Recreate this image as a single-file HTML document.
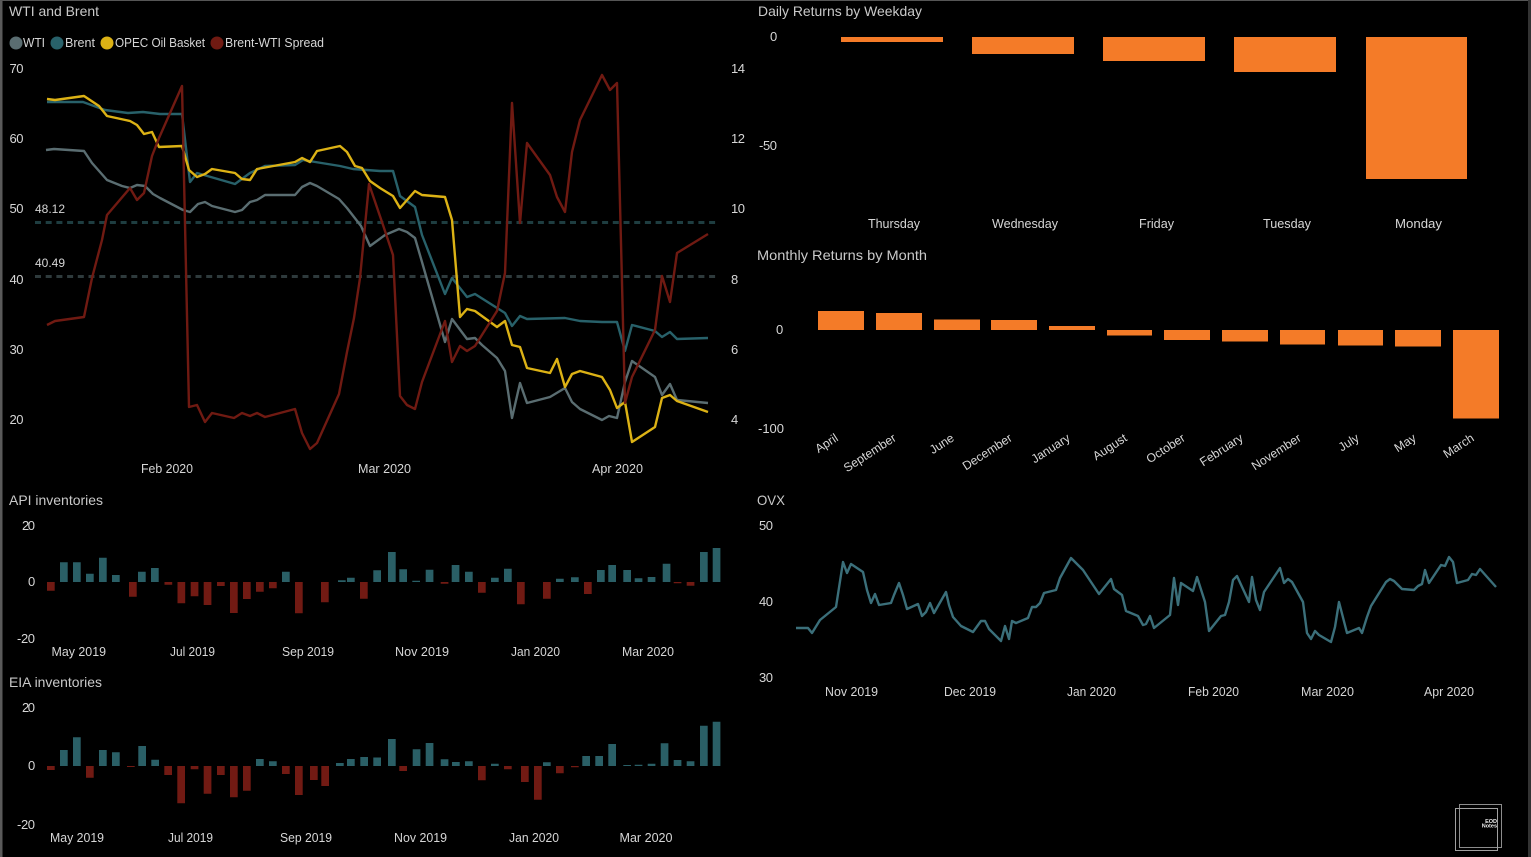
<!DOCTYPE html>
<html><head><meta charset="utf-8"><title>Oil dashboard</title>
<style>
html,body{margin:0;padding:0;background:#000;width:1531px;height:857px;overflow:hidden}
svg{display:block}
text{font-family:"Liberation Sans",sans-serif;font-size:13px;fill:#d6d6d6}
.t{fill:#c9c9c9;font-size:14px}
.l{fill:none;stroke-width:2.4;stroke-linejoin:round;stroke-linecap:butt}
.r text{font-size:12.2px}
</style></head><body>
<svg width="1531" height="857" viewBox="0 0 1531 857" xmlns="http://www.w3.org/2000/svg">
<rect width="1531" height="857" fill="#000"/>
<rect x="0" y="0" width="2.5" height="857" fill="#5a5a5a"/>
<rect x="0" y="0" width="1531" height="1" fill="#555"/>
<rect x="1528" y="0" width="3" height="857" fill="#333"/>

<!-- WTI and Brent -->
<text class="t" x="9" y="16" textLength="90" lengthAdjust="spacingAndGlyphs">WTI and Brent</text>
<circle cx="16" cy="43" r="6.5" fill="#5a6d71"/><text x="23" y="47" textLength="22" lengthAdjust="spacingAndGlyphs">WTI</text>
<circle cx="57" cy="43" r="6.5" fill="#28616a"/><text x="65" y="47" textLength="30" lengthAdjust="spacingAndGlyphs">Brent</text>
<circle cx="107" cy="43" r="6.5" fill="#dcb215"/><text x="115" y="47" textLength="90" lengthAdjust="spacingAndGlyphs">OPEC Oil Basket</text>
<circle cx="217" cy="43" r="6.5" fill="#701a12"/><text x="225" y="47" textLength="99" lengthAdjust="spacingAndGlyphs">Brent-WTI Spread</text>

<text x="9.5" y="73" textLength="14">70</text><text x="9.5" y="143" textLength="14">60</text><text x="9.5" y="213" textLength="14">50</text><text x="9.5" y="284" textLength="14">40</text><text x="9.5" y="354" textLength="14">30</text><text x="9.5" y="424" textLength="14">20</text>
<text x="731" y="73" textLength="14">14</text><text x="731" y="143" textLength="14">12</text><text x="731" y="213" textLength="14">10</text><text x="731" y="284">8</text><text x="731" y="354">6</text><text x="731" y="424">4</text>
<text x="35" y="213" style="font-size:12px" textLength="30">48.12</text>
<text x="35" y="267" style="font-size:12px" textLength="30">40.49</text>
<text x="141" y="473" textLength="52" lengthAdjust="spacingAndGlyphs">Feb 2020</text>
<text x="358" y="473" textLength="53" lengthAdjust="spacingAndGlyphs">Mar 2020</text>
<text x="592" y="473" textLength="51" lengthAdjust="spacingAndGlyphs">Apr 2020</text>

<path d="M35 222.5H718" fill="none" stroke="#1e3d40" stroke-width="3" stroke-dasharray="6 4.7"/>
<path d="M35 276.5H718" fill="none" stroke="#2e3a3c" stroke-width="3" stroke-dasharray="6 4.7"/>

<polyline class="l" stroke="#5a6d71" points="46,150 54,149 84,151 92,163 107,180 122,186 130,188 137,185 145,186 153,194 160,198 183,210 190,212 198,204 205,202 212,206 235,212 242,210 250,202 257,200 265,195 295,195 302,187 310,183 317,186 339,199 347,208 354,217 361,226 370,246 385,235 399,229 407,232 415,238 422,262 445,342 452,319 467,339 475,338 482,345 497,358 505,371 512,418 520,383 527,403 550,397 565,388 572,402 580,409 602,420 609,416 617,418 625,382 632,361 655,377 662,395 670,384 677,400 708,403"/>
<polyline class="l" stroke="#28616a" points="47,102 83,102 105,110 128,113 143,112 160,114 182,114 190,182 197,173 235,184 250,173 265,166 295,165 303,160 340,166 353,169 380,171 393,171 400,196 415,207 422,235 445,294 452,278 467,297 475,294 505,313 512,326 520,316 527,319 565,318 580,321 602,322 617,322 625,351 632,325 655,331 662,337 670,332 677,339 708,338"/>
<polyline class="l" stroke="#dcb215" points="47,99 55,100 84,96 99,106 107,116 130,121 137,125 144,134 152,132 159,147 182,146 189,170 197,177 205,174 212,169 235,173 242,179 250,180 257,169 295,162 302,158 310,162 317,151 340,146 347,152 355,166 362,168 370,181 380,188 393,196 400,208 415,191 422,195 445,197 452,220 460,317 467,309 475,311 497,327 505,321 512,345 520,347 527,368 550,373 557,359 565,387 572,374 580,371 602,377 610,390 617,408 625,402 632,442 655,427 662,398 670,395 677,401 708,412"/>
<polyline class="l" stroke="#701a12" points="47,325 55,321 84,317 92,278 102,240 107,215 130,188 137,200 144,193 152,156 159,138 182,86 189,407 197,405 205,422 212,413 234,418 242,413 250,416 257,413 265,417 295,409 302,433 310,449 317,443 339,394 347,352 354,318 360,278 369,184 383,225 393,255 400,396 407,405 415,409 422,382 445,321 452,362 460,346 467,351 475,346 497,311 505,273 512,103 520,223 527,143 550,175 557,197 565,212 572,152 580,120 602,75 610,90 617,83 625,403 632,377 655,330 662,276 670,302 677,253 708,234"/>

<!-- API inventories -->
<text class="t" x="9" y="505" textLength="94" lengthAdjust="spacingAndGlyphs">API inventories</text>
<text x="22" y="530" textLength="13">20</text><text x="28" y="586">0</text><text x="17" y="643" textLength="18">-20</text>
<text x="51.5" y="656" textLength="54.5" lengthAdjust="spacingAndGlyphs">May 2019</text>
<text x="170" y="656" textLength="45" lengthAdjust="spacingAndGlyphs">Jul 2019</text>
<text x="282" y="656" textLength="52" lengthAdjust="spacingAndGlyphs">Sep 2019</text>
<text x="395" y="656" textLength="54" lengthAdjust="spacingAndGlyphs">Nov 2019</text>
<text x="511" y="656" textLength="49" lengthAdjust="spacingAndGlyphs">Jan 2020</text>
<text x="622" y="656" textLength="52" lengthAdjust="spacingAndGlyphs">Mar 2020</text>
<path fill="#2a5f66" d="M60 582h7.7v-19.7h-7.7zM73 582h7.7v-19.7h-7.7zM86 582h7.7v-8.3h-7.7zM99 582h7.7v-24.3h-7.7zM112 582h7.7v-7h-7.7zM138 582h7.7v-10.3h-7.7zM151 582h7.7v-14h-7.7zM282 582h7.7v-10.3h-7.7zM338 582h7.7v-1.7h-7.7zM347 582h7.7v-4.3h-7.7zM373.3 582h7.7v-11.7h-7.7zM388 582h7.7v-30h-7.7zM399.3 582h7.7v-12.7h-7.7zM412.3 582h7.7v-1.3h-7.7zM425.7 582h7.7v-12.3h-7.7zM451.7 582h7.7v-17h-7.7zM465 582h7.7v-10.3h-7.7zM491 582h7.7v-4.3h-7.7zM504 582h7.7v-13.3h-7.7zM556 582h7.7v-3.3h-7.7zM571 582h7.7v-4.7h-7.7zM597 582h7.7v-12h-7.7zM608.3 582h7.7v-17h-7.7zM623.3 582h7.7v-12h-7.7zM634.7 582h7.7v-3.7h-7.7zM647.7 582h7.7v-5h-7.7zM662.7 582h7.7v-18.3h-7.7zM700 582h7.7v-30h-7.7zM712.7 582h7.7v-34h-7.7z"/>
<path fill="#711a13" d="M47 582h7.7v8.7h-7.7zM129 582h7.7v14.7h-7.7zM164.5 582h7.7v2.7h-7.7zM177.5 582h7.7v21.3h-7.7zM190.7 582h7.7v14.3h-7.7zM203.7 582h7.7v23h-7.7zM217 582h7.7v4h-7.7zM230 582h7.7v31h-7.7zM243 582h7.7v17h-7.7zM256 582h7.7v9.7h-7.7zM269 582h7.7v6.3h-7.7zM295 582h7.7v31.3h-7.7zM321 582h7.7v20.3h-7.7zM360 582h7.7v16.7h-7.7zM440.7 582h7.7v1.7h-7.7zM478 582h7.7v10.7h-7.7zM517 582h7.7v22.3h-7.7zM543 582h7.7v16.7h-7.7zM584 582h7.7v12h-7.7zM673.7 582h7.7v1.3h-7.7zM686.7 582h7.7v3.7h-7.7z"/>

<!-- EIA inventories -->
<text class="t" x="9" y="687" textLength="93" lengthAdjust="spacingAndGlyphs">EIA inventories</text>
<text x="22" y="712" textLength="13">20</text><text x="28" y="770">0</text><text x="17" y="829" textLength="18">-20</text>
<text x="50" y="842" textLength="54" lengthAdjust="spacingAndGlyphs">May 2019</text>
<text x="168" y="842" textLength="45" lengthAdjust="spacingAndGlyphs">Jul 2019</text>
<text x="280" y="842" textLength="52" lengthAdjust="spacingAndGlyphs">Sep 2019</text>
<text x="394" y="842" textLength="53" lengthAdjust="spacingAndGlyphs">Nov 2019</text>
<text x="509" y="842" textLength="50" lengthAdjust="spacingAndGlyphs">Jan 2020</text>
<text x="619.5" y="842" textLength="53" lengthAdjust="spacingAndGlyphs">Mar 2020</text>
<path fill="#2a5f66" d="M60 766h7.7v-16h-7.7zM73 766h7.7v-28.7h-7.7zM99 766h7.7v-16h-7.7zM112 766h7.7v-13.7h-7.7zM138.3 766h7.7v-20h-7.7zM151.3 766h7.7v-6.3h-7.7zM256 766h7.7v-7h-7.7zM269 766h7.7v-4.7h-7.7zM336 766h7.7v-3h-7.7zM347 766h7.7v-7h-7.7zM360.3 766h7.7v-9h-7.7zM373.3 766h7.7v-8.5h-7.7zM388 766h7.7v-27h-7.7zM412.7 766h7.7v-16.7h-7.7zM425.7 766h7.7v-23h-7.7zM440.7 766h7.7v-6.7h-7.7zM452 766h7.7v-4h-7.7zM465 766h7.7v-4.7h-7.7zM491 766h7.7v-2.3h-7.7zM543 766h7.7v-3.7h-7.7zM582.3 766h7.7v-10h-7.7zM595.3 766h7.7v-10h-7.7zM608.3 766h7.7v-22h-7.7zM623.3 766h7.7v-1h-7.7zM634.7 766h7.7v-1.3h-7.7zM647.7 766h7.7v-2.3h-7.7zM660.7 766h7.7v-22.7h-7.7zM673.7 766h7.7v-6h-7.7zM686.7 766h7.7v-4.7h-7.7zM700 766h7.7v-40.3h-7.7zM712.7 766h7.7v-44.3h-7.7z"/>
<path fill="#711a13" d="M47 766h7.7v4h-7.7zM86 766h7.7v11.7h-7.7zM127 766h7.7v1h-7.7zM164.3 766h7.7v9h-7.7zM177.3 766h7.7v37.3h-7.7zM190.7 766h7.7v3.3h-7.7zM203.7 766h7.7v27.7h-7.7zM217 766h7.7v9h-7.7zM230 766h7.7v31.3h-7.7zM243 766h7.7v24.7h-7.7zM282 766h7.7v8h-7.7zM295 766h7.7v29h-7.7zM310 766h7.7v14h-7.7zM321.3 766h7.7v20h-7.7zM399.3 766h7.7v5h-7.7zM478 766h7.7v14.3h-7.7zM504 766h7.7v3.3h-7.7zM521 766h7.7v16h-7.7zM534 766h7.7v33.7h-7.7zM556 766h7.7v7.3h-7.7zM571 766h7.7v1.3h-7.7z"/>

<!-- Daily Returns -->
<text class="t" x="758" y="16" textLength="164" lengthAdjust="spacingAndGlyphs">Daily Returns by Weekday</text>
<text x="770" y="41">0</text><text x="759" y="150" textLength="18">-50</text>
<g fill="#f47b28">
<rect x="841" y="37" width="102" height="5"/><rect x="972" y="37" width="102" height="17"/><rect x="1103" y="37" width="102" height="24"/><rect x="1234" y="37" width="102" height="35"/><rect x="1366" y="37" width="101" height="142"/>
</g>
<text x="868" y="228" textLength="52" lengthAdjust="spacingAndGlyphs">Thursday</text>
<text x="992" y="228" textLength="66" lengthAdjust="spacingAndGlyphs">Wednesday</text>
<text x="1139" y="228" textLength="35" lengthAdjust="spacingAndGlyphs">Friday</text>
<text x="1263" y="228" textLength="48" lengthAdjust="spacingAndGlyphs">Tuesday</text>
<text x="1395" y="228" textLength="47" lengthAdjust="spacingAndGlyphs">Monday</text>

<!-- Monthly Returns -->
<text class="t" x="757" y="260" textLength="170" lengthAdjust="spacingAndGlyphs">Monthly Returns by Month</text>
<text x="776" y="334">0</text><text x="758" y="433" textLength="26">-100</text>
<g fill="#f47b28">
<rect x="818" y="311" width="46" height="19"/><rect x="876" y="313" width="46" height="17"/><rect x="934" y="319.5" width="46" height="10.5"/><rect x="991" y="320" width="46" height="10"/><rect x="1049" y="326" width="46" height="4"/>
<rect x="1107" y="330" width="45" height="5.5"/><rect x="1164" y="330" width="46" height="10"/><rect x="1222" y="330" width="46" height="11.5"/><rect x="1280" y="330" width="45" height="14.5"/><rect x="1338" y="330" width="45" height="15.5"/><rect x="1395" y="330" width="46" height="16.5"/><rect x="1453" y="330" width="46" height="88.5"/>
</g>
<g class="r" text-anchor="end">
<text transform="translate(839,440) rotate(-33)">April</text>
<text transform="translate(897,440) rotate(-33)">September</text>
<text transform="translate(955,440) rotate(-33)">June</text>
<text transform="translate(1013,440) rotate(-33)">December</text>
<text transform="translate(1071,440) rotate(-33)">January</text>
<text transform="translate(1128,440) rotate(-33)">August</text>
<text transform="translate(1186,440) rotate(-33)">October</text>
<text transform="translate(1244,440) rotate(-33)">February</text>
<text transform="translate(1302,440) rotate(-33)">November</text>
<text transform="translate(1360,440) rotate(-33)">July</text>
<text transform="translate(1417,440) rotate(-33)">May</text>
<text transform="translate(1475,440) rotate(-33)">March</text>
</g>

<!-- OVX -->
<text class="t" x="757" y="505" textLength="28" lengthAdjust="spacingAndGlyphs">OVX</text>
<text x="759" y="530" textLength="14">50</text><text x="759" y="606" textLength="14">40</text><text x="759" y="682" textLength="14">30</text>
<text x="825" y="696" textLength="53" lengthAdjust="spacingAndGlyphs">Nov 2019</text>
<text x="944" y="696" textLength="52" lengthAdjust="spacingAndGlyphs">Dec 2019</text>
<text x="1067" y="696" textLength="49" lengthAdjust="spacingAndGlyphs">Jan 2020</text>
<text x="1188" y="696" textLength="51" lengthAdjust="spacingAndGlyphs">Feb 2020</text>
<text x="1301" y="696" textLength="53" lengthAdjust="spacingAndGlyphs">Mar 2020</text>
<text x="1424" y="696" textLength="50" lengthAdjust="spacingAndGlyphs">Apr 2020</text>
<polyline class="l" stroke="#3b6f7a" points="796,628 808,628 812,633 820,620 836,607 843,562 847,573 851,564 863,572 867,590 871,603 875,594 879,605 891,603 894,595 899,583 903,595 907,609 918,604 922,616 926,612 930,603 934,613 946,592 949,605 953,617 961,626 973,632 981,621 985,621 989,629 1001,641 1005,626 1009,639 1012,621 1016,623 1028,618 1032,607 1036,607 1040,603 1044,593 1056,590 1060,578 1071,558 1083,570 1099,594 1111,579 1114,589 1122,595 1126,611 1138,616 1143,625 1146,624 1150,616 1154,628 1170,615 1174,578 1178,605 1181,583 1193,591 1197,577 1205,602 1209,631 1221,616 1225,615 1229,602 1233,580 1237,576 1249,602 1252,577 1256,600 1260,610 1264,592 1280,568 1284,583 1288,579 1292,582 1303,602 1307,633 1311,639 1315,631 1319,635 1331,642 1335,627 1339,602 1347,633 1359,628 1362,633 1367,617 1371,606 1386,582 1390,579 1394,581 1402,589 1414,590 1418,586 1422,584 1425,570 1429,583 1441,565 1445,566 1449,557 1453,562 1457,583 1468,580 1472,574 1476,575 1480,569 1496,587"/>

<!-- Logo -->
<rect x="1459.5" y="804.5" width="42" height="43" fill="none" stroke="#8c8c8c" stroke-width="1"/>
<rect x="1455.5" y="808.5" width="42" height="42" fill="none" stroke="#a0a0a0" stroke-width="1"/>
<text x="1497" y="823" text-anchor="end" style="font-size:5.5px;font-weight:bold;fill:#eee">EOD</text>
<text x="1497" y="827.5" text-anchor="end" style="font-size:5.5px;font-weight:bold;fill:#eee">Notes</text>
</svg>
</body></html>
